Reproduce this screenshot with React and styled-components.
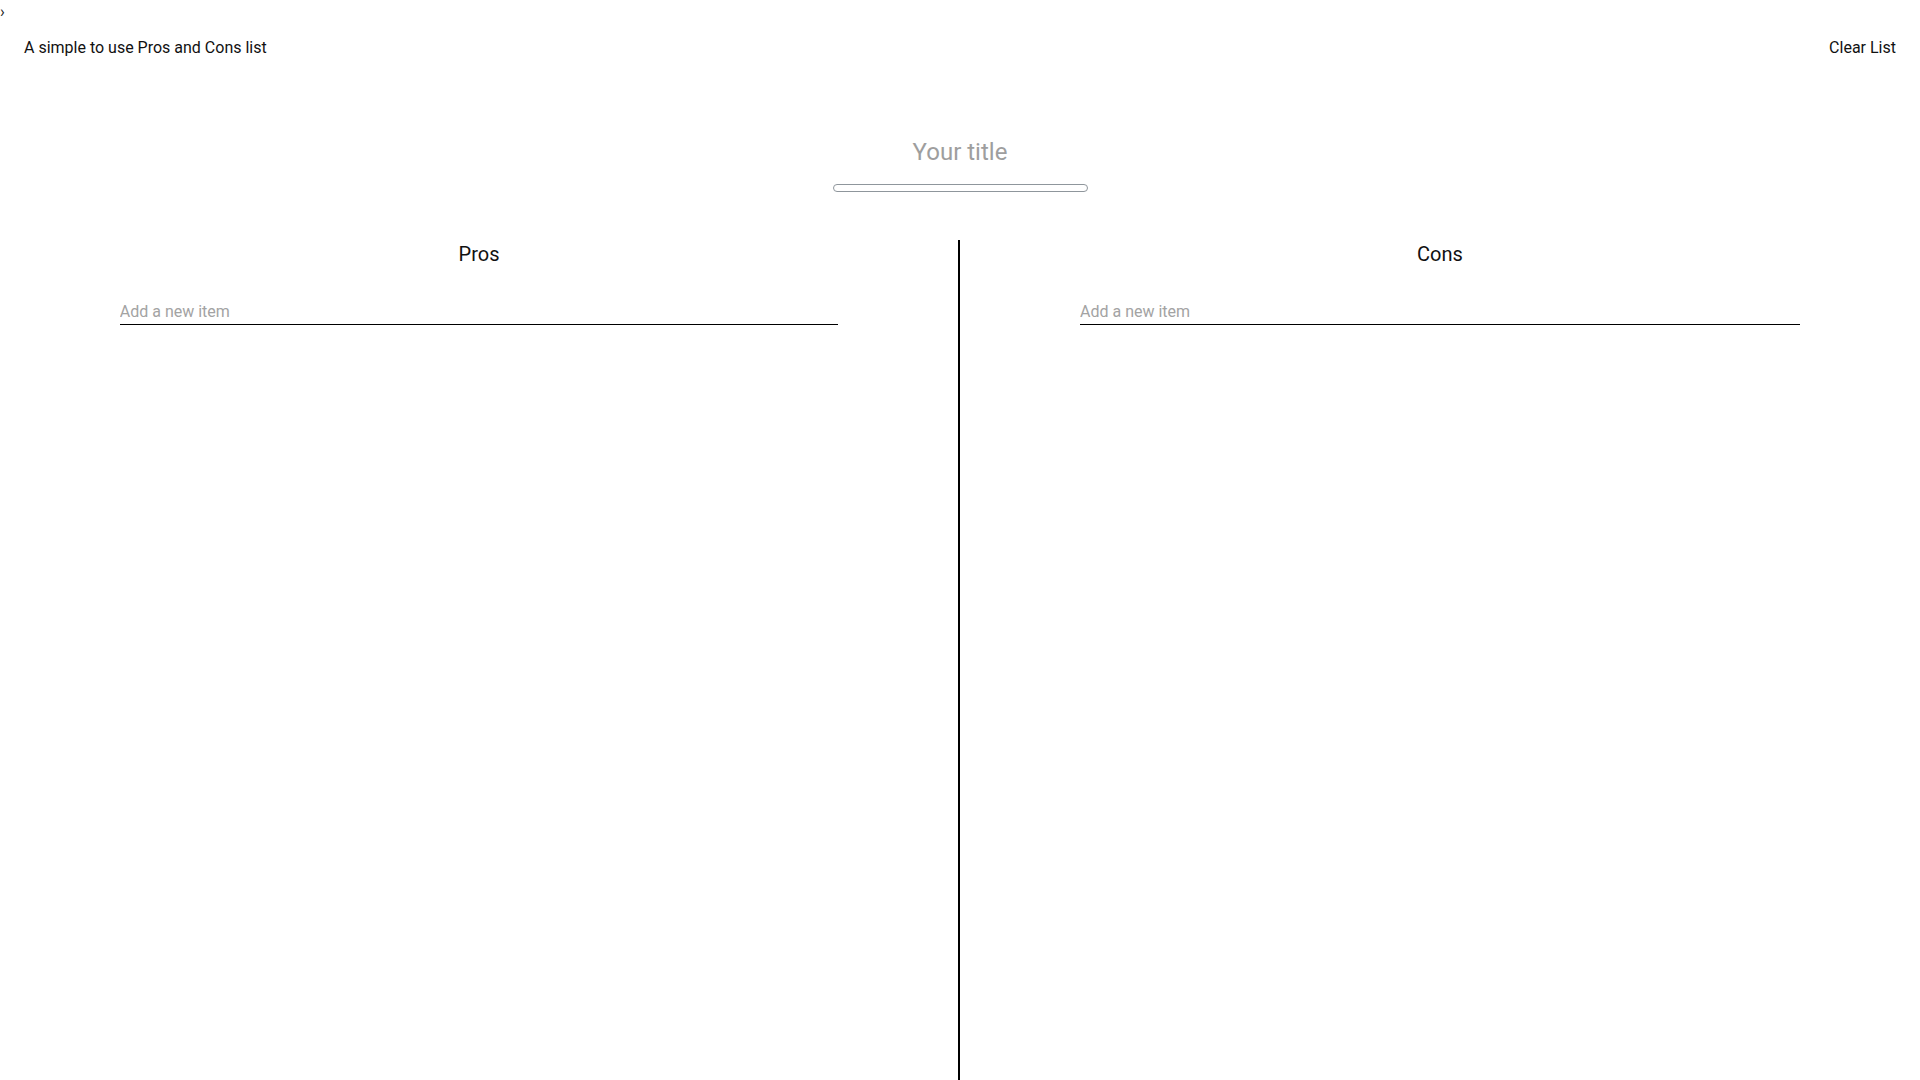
import React from "react";
import styled, { createGlobalStyle } from "styled-components";

const GlobalStyle = createGlobalStyle`
  html, body {
    margin: 0;
    padding: 0;
    background: #fff;
    font-family: Roboto, "Liberation Sans", Arial, sans-serif;
    color: #111;
  }
  * { box-sizing: border-box; }
`;

function App() {
  return (
    <>
      <GlobalStyle />
      <Page>
        <Toggle>›</Toggle>
        <Header>
          <Tagline>A simple to use Pros and Cons list</Tagline>
          <ClearButton type="button">Clear List</ClearButton>
        </Header>

        <TitleBlock>
          <TitleInput placeholder="Your title" />
          <TitleBar />
        </TitleBlock>

        <Columns>
          <Column $side="left">
            <ColumnTitle>Pros</ColumnTitle>
            <ItemInput placeholder="Add a new item" />
          </Column>
          <Divider />
          <Column $side="right">
            <ColumnTitle>Cons</ColumnTitle>
            <ItemInput placeholder="Add a new item" />
          </Column>
        </Columns>
      </Page>
    </>
  );
}

const Page = styled.div`
  min-height: 100vh;
  display: flex;
  flex-direction: column;
`;

const Toggle = styled.div`
  height: 20px;
  padding-top: 2px;
  font-size: 16px;
  line-height: 20px;
  color: #222;
`;

const Header = styled.header`
  margin-top: 16px;
  padding: 0 24px;
  display: flex;
  align-items: center;
  justify-content: space-between;
  height: 24px;
`;

const Tagline = styled.p`
  margin: 0;
  font-size: 16px;
  line-height: 24px;
`;

const ClearButton = styled.button`
  border: none;
  background: none;
  padding: 0;
  font-family: inherit;
  font-size: 16px;
  line-height: 24px;
  color: #111;
  cursor: pointer;
`;

const TitleBlock = styled.div`
  margin-top: 76px;
  display: flex;
  flex-direction: column;
  align-items: center;
`;

const TitleInput = styled.input`
  width: 400px;
  height: 32px;
  border: none;
  outline: none;
  padding: 0;
  text-align: center;
  font-family: inherit;
  font-size: 24px;
  color: #333;
  background: transparent;

  &::placeholder {
    color: #9e9e9e;
  }
`;

const TitleBar = styled.div`
  margin-top: 16px;
  width: 255px;
  height: 8px;
  border: 1px solid #8f969c;
  border-radius: 4px;
`;

const Columns = styled.div`
  margin-top: 48px;
  flex: 1;
  display: flex;
`;

const Column = styled.section`
  flex: ${({ $side }) => ($side === "left" ? "0 0 958px" : "1")};
  padding-top: 2px;
  display: flex;
  flex-direction: column;
  align-items: center;
`;

const Divider = styled.div`
  width: 2px;
  background: #000;
`;

const ColumnTitle = styled.h2`
  margin: 0;
  font-size: 20px;
  font-weight: 400;
  line-height: 24px;
`;

const ItemInput = styled.input`
  margin-top: 35px;
  width: 75%;
  height: 24px;
  padding: 0 0 2px;
  border: none;
  border-bottom: 1px solid #000;
  outline: none;
  font-family: inherit;
  font-size: 16px;
  background: transparent;

  &::placeholder {
    color: #a3a3a3;
  }
`;

export default App;
